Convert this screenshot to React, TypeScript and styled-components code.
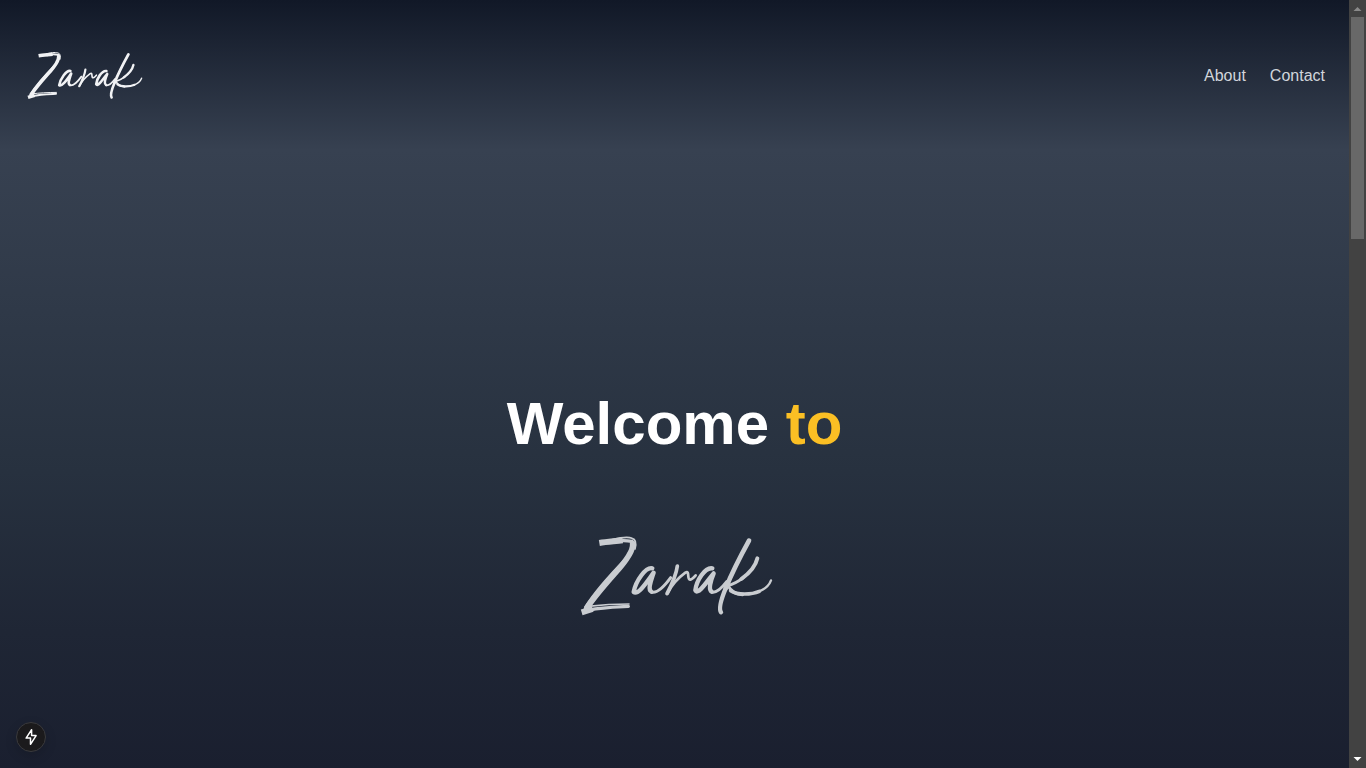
import React from "react";
import styled, { createGlobalStyle } from "styled-components";

const GlobalStyle = createGlobalStyle`
  * { box-sizing: border-box; }
  html, body { margin: 0; height: 100%; overflow: hidden; }
  body { font-family: "Liberation Sans", Arial, sans-serif; color: #fff; background: #111827; }
`;

const Shell = styled.div`
  display: flex;
  height: 768px;
  overflow: hidden;
`;

const Page = styled.div`
  flex: 1;
  display: flex;
  flex-direction: column;
`;

const Header = styled.header`
  height: 150px;
  flex: none;
  display: flex;
  align-items: center;
  justify-content: space-between;
  padding: 0 24px 0 21px;
  background: linear-gradient(to bottom, #111827, #374151);
`;

const Nav = styled.nav`
  display: flex;
  gap: 24px;
  padding-top: 2px;
`;

const NavLink = styled.a`
  font-size: 16px;
  line-height: 24px;
  color: #d1d5db;
`;

const Hero = styled.main`
  flex: 1;
  display: flex;
  flex-direction: column;
  align-items: center;
  padding-top: 244px;
  background: linear-gradient(to bottom, #374151, #27313f 52%, #1f2635 78%, #1a1f2f);
`;

const Title = styled.h1`
  margin: 0;
  font-size: 60px;
  line-height: 60px;
  font-weight: 700;
`;

const Accent = styled.span`
  color: #fbbf24;
`;

const LogoSvg = styled.svg<{ $dim?: boolean }>`
  display: block;
  flex: none;
  fill: none;
  stroke: ${(p) => (p.$dim ? "#c9ccd0" : "#f1f2f4")};
  stroke-linecap: round;
  stroke-linejoin: round;
`;

const HeroLogo = styled.div`
  margin: 71px 0 0 5px;
`;

const Track = styled.div`
  width: 17px;
  display: flex;
  flex-direction: column;
  align-items: center;
  justify-content: space-between;
  background: #424242;
`;

const Thumb = styled.div`
  width: 13px;
  height: 222px;
  background: #686868;
`;

const ArrowBox = styled.svg`
  display: block;
  width: 17px;
  height: 17px;
`;

const TrackTop = styled.div`
  display: flex;
  flex-direction: column;
  align-items: center;
`;

const DevBadge = styled.div`
  position: absolute;
  left: 16px;
  top: 722px;
  width: 30px;
  height: 30px;
  border-radius: 50%;
  display: flex;
  align-items: center;
  justify-content: center;
  background: #1b1a1c;
  border: 1px solid #3a3a3d;
  box-shadow: 0 4px 12px rgba(0, 0, 0, 0.15);
`;

function Logo({ width, dim }: { width: number; dim?: boolean }) {
  return (
    <LogoSvg $dim={dim} width={width} height={(width * 100) / 215} viewBox="0 0 645 300" role="img" aria-label="Zarak">
      <path strokeWidth="18" strokeLinecap="butt" d="M88 54C112 50 134 49 158 46" />
      <path strokeWidth="10" d="M130 51C150 45 168 46 186 49" />
      <path strokeWidth="5" d="M128 44C158 36 178 36 186 40C197 43 199 57 195 72" />
      <path strokeWidth="17" d="M188 56C191 78 165 112 134 146C104 180 74 214 50 250" />
      <path strokeWidth="7" d="M165 104C122 148 78 196 46 246" />
      <path strokeWidth="18" strokeLinecap="butt" d="M35 262L68 252" />
      <path strokeWidth="10" d="M58 255C95 247 135 246 175 244" />
      <path strokeWidth="5" d="M54 244C90 240 135 237 177 237" />
      <path strokeWidth="13" d="M247 130C227 125 197 169 191 201C205 212 233 167 251 143C243 168 232 194 244 200" />
      <path strokeWidth="9" d="M244 201C262 207 283 184 302 158" />
      <path strokeWidth="11" d="M322 123C319 148 304 181 291 206" />
      <path strokeWidth="8" d="M293 205C305 179 327 157 346 143C361 135 349 164 361 164C366 163 371 158 377 151" />
      <path strokeWidth="13" d="M427 130C405 126 379 167 376 196C384 212 414 165 431 145C421 169 415 194 425 200" />
      <path strokeWidth="9" d="M425 201C441 206 457 187 470 170" />
      <path strokeWidth="14" d="M537 47C515 87 489 136 467 190" />
      <path strokeWidth="13" d="M467 190C453 224 446 252 453 262" />
      <path strokeWidth="12" d="M562 100C557 123 536 146 514 162" />
      <path strokeWidth="9" d="M520 158C503 171 490 178 474 182C485 202 500 208 518 209" />
      <path strokeWidth="11" d="M482 197C502 211 545 209 568 199" />
      <path strokeWidth="7" d="M563 201C585 193 598 180 603 166" />
    </LogoSvg>
  );
}

export default function App() {
  return (
    <>
      <GlobalStyle />
      <Shell>
        <Page>
          <Header>
            <Logo width={129} />
            <Nav>
              <NavLink>About</NavLink>
              <NavLink>Contact</NavLink>
            </Nav>
          </Header>
          <Hero>
            <Title>
              Welcome <Accent>to</Accent>
            </Title>
            <HeroLogo>
              <Logo width={215} dim />
            </HeroLogo>
          </Hero>
        </Page>
        <Track>
          <TrackTop>
            <ArrowBox viewBox="0 0 17 17"><path d="M4.5 11L8.5 7L12.5 11Z" fill="#8a8a8a" /></ArrowBox>
            <Thumb />
          </TrackTop>
          <ArrowBox viewBox="0 0 17 17"><path d="M4.5 6L8.5 10L12.5 6Z" fill="#fff" /></ArrowBox>
        </Track>
      </Shell>
      <DevBadge>
        <svg width="16" height="18" viewBox="0 0 16 18" fill="none" stroke="#fff" strokeWidth="1.5" strokeLinejoin="round">
          <path d="M8.6 1.7L3.1 10.1H7.5V16.3L13.1 7.6H8.6Z" />
        </svg>
      </DevBadge>
    </>
  );
}
